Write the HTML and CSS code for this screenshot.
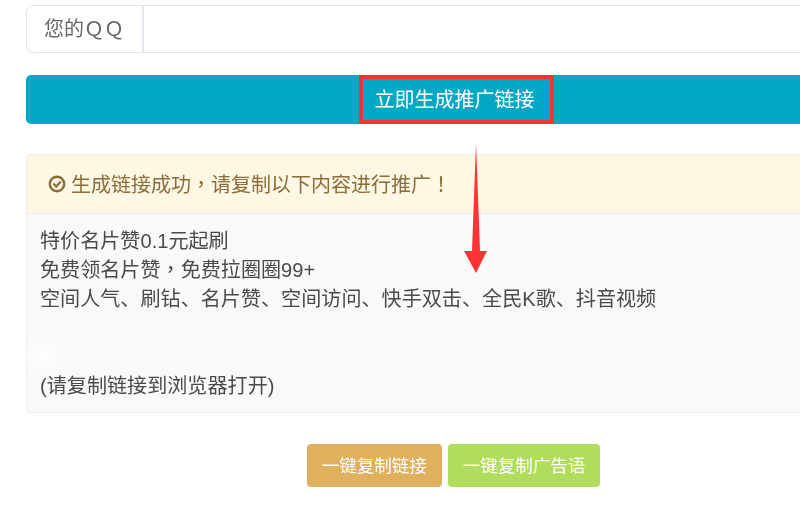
FILE: index.html
```html
<!DOCTYPE html>
<html lang="zh-CN">
<head>
    <meta charset="UTF-8">
    <meta name="viewport" content="width=device-width, initial-scale=1.0">
    <title>生成推广链接</title>
    <link rel="stylesheet" href="styles.css">
</head>
<body>
    <div class="container">
        <div class="input-group">
            <span class="input-addon">您的ＱＱ</span>
            <input class="input-field" type="text">
        </div>

        <button class="btn-generate">立即生成推广链接</button>

        <div class="result">
            <div class="alert">
                <svg class="alert-icon" viewBox="0 0 18 18" width="18" height="18">
                    <circle cx="9" cy="9" r="7.2" fill="none" stroke="#8a6d3b" stroke-width="2.4"/>
                    <path d="M5.4 8.6 8.2 11.6 12.8 6.6" fill="none" stroke="#8a6d3b" stroke-width="2.2"/>
                </svg>
                <span>生成链接成功<span class="punct" lang="zh-TW">，</span>请复制以下内容进行推广<span class="punct" lang="zh-TW">！</span></span>
            </div>
            <div class="well">
                <p>特价名片赞0.1元起刷</p>
                <p>免费领名片赞<span class="punct" lang="zh-TW">，</span>免费拉圈圈99+</p>
                <p>空间人气、刷钻、名片赞、空间访问、快手双击、全民K歌、抖音视频</p>
                <p class="blank"></p>
                <p class="blank"></p>
                <p>(请复制链接到浏览器打开)</p>
            </div>
        </div>

        <div class="actions">
            <button class="btn btn-link">一键复制链接</button>
            <button class="btn btn-ad">一键复制广告语</button>
        </div>
    </div>

    <!-- annotations drawn on top of the screenshot -->
    <div class="red-box"></div>
    <svg class="red-arrow" viewBox="0 0 30 136" width="30" height="136">
        <path d="M15 0 19 108 26 108 15 130 3 108 11 108Z" fill="#ff3333"/>
    </svg>
    <div class="smudge smudge-a"></div>
    <div class="smudge smudge-b"></div>
</body>
</html>
```

FILE: styles.css
```css
html, body {
    margin: 0;
    height: 507px;
    overflow: hidden;
    background: #fff;
}
body {
    position: relative;
    font-family: "Liberation Sans", "Noto Sans CJK SC", sans-serif;
    font-size: 20px;
    color: #555;
}
.container {
    width: 857px;
    margin-left: 26px;
    padding-top: 5px;
    filter: blur(0.35px);
}
.input-group {
    display: flex;
    height: 48px;
    box-sizing: border-box;
    border: 1px solid #dde3ec;
    border-radius: 7px;
    overflow: hidden;
}
.input-addon {
    width: 117px;
    box-sizing: border-box;
    border-right: 2px solid #e3e7ef;
    padding-left: 17px;
    line-height: 46px;
    color: #666;
    white-space: nowrap;
}
.input-field {
    flex: 1;
    border: none;
    outline: none;
}
.btn-generate {
    display: block;
    width: 100%;
    height: 49px;
    margin-top: 22px;
    border: none;
    border-radius: 5px;
    background-color: #03a9c4;
    color: #fff;
    font: inherit;
    line-height: 47px;
    padding: 2px 0 0;
    text-align: center;
}
.result {
    margin-top: 30px;
}
.alert {
    display: flex;
    align-items: center;
    gap: 5px;
    height: 60px;
    box-sizing: border-box;
    padding-left: 21px;
    padding-bottom: 1px;
    background-color: #fdf7e3;
    border: 1px solid #f0eee6;
    border-bottom-color: #e8e8e8;
    border-radius: 4px 4px 0 0;
    color: #8a6d3b;
}
.alert-icon {
    flex-shrink: 0;
}
.punct {
    font-family: "Noto Sans CJK TC", sans-serif;
    line-height: 0;
}
.well {
    height: 199px;
    box-sizing: border-box;
    padding: 13px 13px;
    background-color: #f9f9f9;
    border: 1px solid #eee;
    border-top: none;
    border-radius: 0 0 4px 4px;
    color: #4a4a4a;
    font-size: 20.1px;
}
.well p {
    margin: 0;
    line-height: 29px;
    height: 29px;
    white-space: nowrap;
}
.actions {
    display: flex;
    justify-content: center;
    gap: 6px;
    margin-top: 31px;
    padding-right: 2px;
}
.btn {
    height: 43px;
    border: none;
    border-radius: 4px;
    color: #fff;
    font: inherit;
    font-size: 17.5px;
    padding: 0 15px 2px;
}
.btn-link {
    background-color: #dfb15f;
}
.btn-ad {
    background-color: #b0de5c;
}
.red-box {
    position: absolute;
    left: 359px;
    top: 75px;
    width: 195px;
    height: 49px;
    box-sizing: border-box;
    border: 4px solid #f53333;
}
.red-arrow {
    position: absolute;
    left: 461px;
    top: 143px;
}
.smudge {
    position: absolute;
    background: #fff;
    border-radius: 50%;
    filter: blur(6px);
    opacity: 0.8;
}
.smudge-a {
    left: 30px;
    top: 342px;
    width: 24px;
    height: 26px;
}
.smudge-b {
    left: 141px;
    top: 359px;
    width: 10px;
    height: 10px;
}
```
